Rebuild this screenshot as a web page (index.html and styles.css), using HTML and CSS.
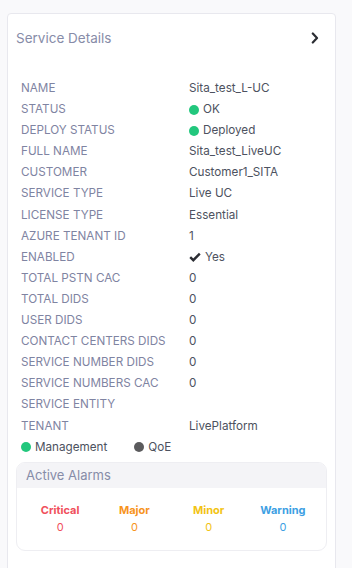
FILE: index.html
```html
<!DOCTYPE html>
<html lang="en">

<head>
  <meta charset="UTF-8">
  <meta name="viewport" content="width=device-width, initial-scale=1">
  <title>Service Details</title>
  <link rel="stylesheet" href="styles.css">
</head>

<body>
  <div class="card">
    <div class="card-header">
      <span class="card-title">Service Details</span>
      <svg class="chevron" width="8" height="12" viewBox="0 0 8 12">
        <path d="M1.8 1.5 L6 6 L1.8 10.5" fill="none" stroke="#2b2d33" stroke-width="2.2" stroke-linecap="round" stroke-linejoin="round"/>
      </svg>
    </div>

    <div class="details">
      <div class="label">NAME</div><div class="value">Sita_test_L-UC</div>
      <div class="label">STATUS</div><div class="value"><span class="dot green"></span>OK</div>
      <div class="label">DEPLOY STATUS</div><div class="value"><span class="dot green"></span>Deployed</div>
      <div class="label">FULL NAME</div><div class="value">Sita_test_LiveUC</div>
      <div class="label">CUSTOMER</div><div class="value">Customer1_SITA</div>
      <div class="label">SERVICE TYPE</div><div class="value">Live UC</div>
      <div class="label">LICENSE TYPE</div><div class="value">Essential</div>
      <div class="label">AZURE TENANT ID</div><div class="value">1</div>
      <div class="label">ENABLED</div>
      <div class="value">
        <svg class="check" width="12" height="10" viewBox="0 0 12 10">
          <path d="M1.2 5.2 L4.3 8.2 L10.8 1.6" fill="none" stroke="#2b2d33" stroke-width="2.4" stroke-linejoin="miter"/>
        </svg>Yes
      </div>
      <div class="label">TOTAL PSTN CAC</div><div class="value">0</div>
      <div class="label">TOTAL DIDS</div><div class="value">0</div>
      <div class="label">USER DIDS</div><div class="value">0</div>
      <div class="label">CONTACT CENTERS DIDS</div><div class="value">0</div>
      <div class="label">SERVICE NUMBER DIDS</div><div class="value">0</div>
      <div class="label">SERVICE NUMBERS CAC</div><div class="value">0</div>
      <div class="label">SERVICE ENTITY</div><div class="value"></div>
      <div class="label">TENANT</div><div class="value">LivePlatform</div>
    </div>

    <div class="legend">
      <span class="legend-item"><span class="dot green"></span>Management</span>
      <span class="legend-item"><span class="dot gray"></span>QoE</span>
    </div>

    <div class="alarms">
      <div class="alarms-header">Active Alarms</div>
      <div class="alarms-body">
        <div class="alarm critical"><div class="alarm-name">Critical</div><div>0</div></div>
        <div class="alarm major"><div class="alarm-name">Major</div><div>0</div></div>
        <div class="alarm minor"><div class="alarm-name">Minor</div><div>0</div></div>
        <div class="alarm warning"><div class="alarm-name">Warning</div><div>0</div></div>
      </div>
    </div>
  </div>
</body>

</html>
```

FILE: styles.css
```css
* {
  box-sizing: border-box;
}

body {
  margin: 0;
  background-color: #f9f9fb;
  font-family: Inter, "Noto Sans", sans-serif;
  font-size: 11.7px;
  color: #4b4f5c;
}

.card {
  margin: 13px 0 0 7px;
  width: 329px;
  min-height: 600px;
  background-color: #fff;
  border: 1px solid #e8e8ee;
  border-radius: 4px;
}

.card-header {
  display: flex;
  justify-content: space-between;
  align-items: center;
  padding: 14px 16px 0 8px;
  line-height: 20px;
}

.card-title {
  font-size: 13.5px;
  color: #878ca8;
}

.chevron {
  display: block;
}

.details {
  display: grid;
  grid-template-columns: 168px 1fr;
  margin-top: 30px;
  padding-left: 13px;
  line-height: 21.1px;
}

.label {
  color: #7f84a2;
}

.value {
  display: flex;
  align-items: center;
  color: #4d5260;
}

.dot {
  display: inline-block;
  width: 10px;
  height: 10px;
  border-radius: 50%;
  margin-right: 4px;
}

.dot.green {
  background-color: #22c77d;
}

.dot.gray {
  background-color: #5b5b5d;
}

.check {
  margin-right: 4px;
}

.legend {
  display: flex;
  padding-left: 13px;
  line-height: 21px;
  color: #4d5260;
}

.legend-item {
  display: flex;
  align-items: center;
}

.legend-item + .legend-item {
  margin-left: 27px;
}

.alarms {
  margin: 4px 8px 0 8px;
  border: 1px solid #eeeef2;
  border-radius: 9px;
  overflow: hidden;
}

.alarms-header {
  background-color: #f4f4f7;
  height: 25px;
  padding-left: 9px;
  line-height: 24px;
  font-size: 13px;
  color: #878ca8;
}

.alarms-body {
  display: grid;
  grid-template-columns: repeat(4, 1fr);
  padding: 14px 6px 14px 6px;
  text-align: center;
  font-size: 11px;
  line-height: 17px;
}

.alarm-name {
  font-weight: 700;
}

.critical {
  color: #f0505c;
}

.major {
  color: #f7941d;
}

.minor {
  color: #f2c314;
}

.warning {
  color: #3d9fe3;
}
```
